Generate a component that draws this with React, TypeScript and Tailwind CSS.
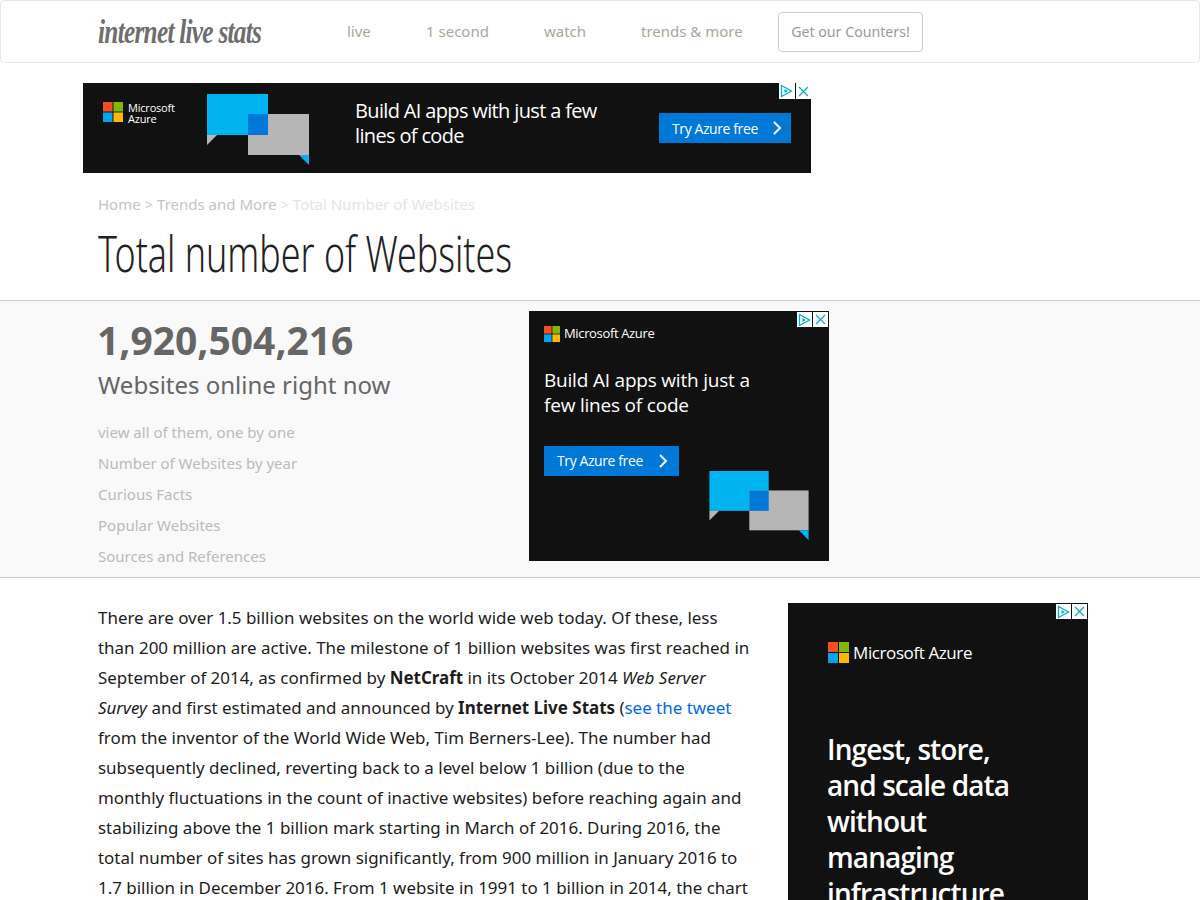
function AdChoices({ pos, box }: { pos: string; box: string }) {
  return (
    <div className={`absolute flex gap-px ${pos}`}>
      <div className={`flex items-center justify-center bg-white ${box}`}>
        <svg width="13" height="14" viewBox="0 0 13 14" fill="none" stroke="#00aecd" strokeWidth="1.3">
          <path d="M1.5 1.5v11l10-5.5z" />
          <path d="M4.5 5v4l3.5-2z" fill="#00aecd" stroke="none" />
        </svg>
      </div>
      <div className={`flex items-center justify-center bg-white ${box}`}>
        <svg width="11" height="11" viewBox="0 0 11 11" fill="none" stroke="#00aecd" strokeWidth="1.2">
          <path d="M1 1l9 9M10 1l-9 9" />
        </svg>
      </div>
    </div>
  );
}

function MsLogo({ size }: { size: number }) {
  return (
    <svg width={size} height={size} viewBox="0 0 21 21" className="shrink-0">
      <rect width="10" height="10" fill="#f25022" />
      <rect x="11" width="10" height="10" fill="#7fba00" />
      <rect y="11" width="10" height="10" fill="#00a4ef" />
      <rect x="11" y="11" width="10" height="10" fill="#ffb900" />
    </svg>
  );
}

function ChatBubbles({ w, h }: { w: number; h: number }) {
  return (
    <svg width={w} height={h} viewBox="0 0 102 72" className="shrink-0">
      <rect x="0" y="0" width="61" height="41" fill="#00b4ef" />
      <path d="M0 41h10L0 51z" fill="#b6b6b6" />
      <rect x="41" y="20" width="61" height="41" fill="#b6b6b6" />
      <rect x="41" y="20" width="20" height="21" fill="#0078d7" />
      <path d="M102 61H92l10 10z" fill="#00b4ef" />
    </svg>
  );
}

function Chevron() {
  return (
    <svg width="10" height="14" viewBox="0 0 10 14" fill="none" stroke="#fff" strokeWidth="2">
      <path d="M2 1l6 6-6 6" />
    </svg>
  );
}

const navItems = [
  { label: "live", cls: "w-[79px]" },
  { label: "1 second", cls: "w-[118px]" },
  { label: "watch", cls: "w-[97px]" },
  { label: "trends & more", cls: "w-[137px]" },
];

const sideLinks = [
  "view all of them, one by one",
  "Number of Websites by year",
  "Curious Facts",
  "Popular Websites",
  "Sources and References",
];

export default function App() {
  return (
    <div className="h-[900px] overflow-hidden bg-white font-['Noto_Sans',sans-serif] text-[#333]">
      <nav className="flex h-[63px] items-center rounded-[4px] border border-[#e7e7e7] bg-white pl-[97px]">
        <div className="w-[249px] font-['Liberation_Serif',serif] text-[34px] font-bold italic leading-none text-[#6e6e6e] [letter-spacing:-1px]">
          <span className="inline-block origin-left scale-x-[0.745] whitespace-nowrap">internet live stats</span>
        </div>
        <div className="flex text-[15px] text-[#a8a898]">
          {navItems.map((item) => (
            <span key={item.label} className={item.cls}>
              {item.label}
            </span>
          ))}
        </div>
        <button className="h-10 w-[145px] rounded-[4px] border border-[#ccc] text-[14.2px] text-[#999]">
          Get our Counters!
        </button>
      </nav>

      <div className="relative ml-[83px] mt-5 flex h-[90px] w-[728px] items-start bg-[#111] text-white">
        <AdChoices pos="right-0 top-0" box="h-4 w-[15.5px]" />
        <div className="ml-5 mt-[19px] flex items-start gap-[5px]">
          <MsLogo size={20} />
          <span className="w-[60px] font-['Open_Sans',sans-serif] text-[11px] font-medium leading-[11px] tracking-[-0.2px]">
            Microsoft Azure
          </span>
        </div>
        <div className="ml-[19px] mt-[11px]">
          <ChatBubbles w={102} h={72} />
        </div>
        <h2 className="ml-[46px] mt-[15px] w-[260px] font-['Open_Sans',sans-serif] text-[20px] font-medium leading-[25px] tracking-[-0.65px]">
          Build AI apps with just a few lines of code
        </h2>
        <div className="ml-[44px] mt-[30px] flex h-[30px] w-[132px] items-center justify-between bg-[#0078d7] pl-[13px] pr-[9px] font-['Open_Sans',sans-serif] text-[14px] font-medium tracking-[-0.4px]">
          Try Azure free
          <Chevron />
        </div>
      </div>

      <div className="ml-[98px] mt-5 text-[15px] leading-[22px] text-[#ccc]">
        <span className="text-[#c4c4c4]">Home</span> &gt; <span className="text-[#c4c4c4]">Trends and More</span>{" "}
        <span className="text-[#e5e5e5]">&gt; Total Number of Websites</span>
      </div>

      <h1 className="ml-[98px] mt-[5px] h-[80px] text-[50px] font-light leading-[66px] text-[#222]">
        <span className="inline-block origin-left scale-x-[0.716] whitespace-nowrap">Total number of Websites</span>
      </h1>

      <section className="flex h-[278px] border-y border-[#ccc] bg-[#f9f9f9] pl-[98px]">
        <div className="w-[431px]">
          <div className="-ml-px mt-[13px] text-[39px] font-bold leading-[52px] text-[#666]">1,920,504,216</div>
          <div className="mt-[2px] text-[24px] leading-[34px] text-[#666]">Websites online right now</div>
          <ul className="mt-[15px] text-[15px] leading-[31px] text-[#bbb]">
            {sideLinks.map((l) => (
              <li key={l}>{l}</li>
            ))}
          </ul>
        </div>
        <div className="relative mt-[10px] h-[250px] w-[300px] bg-[#111] pl-[15px] font-['Open_Sans',sans-serif] text-white">
          <AdChoices pos="right-px top-px" box="h-[15px] w-[15px]" />
          <div className="flex items-center gap-[4px] pt-[13px]">
            <MsLogo size={16} />
            <span className="text-[13px] font-medium tracking-[-0.35px]">Microsoft Azure</span>
          </div>
          <h2 className="mt-[24px] w-[220px] text-[19px] font-medium leading-[25px] tracking-[-0.2px]">
            Build AI apps with just a few lines of code
          </h2>
          <div className="flex">
            <div className="mt-[28px] flex h-[30px] w-[135px] items-center justify-between bg-[#0078d7] pl-[13px] pr-[11px] text-[14px] font-medium tracking-[-0.4px]">
              Try Azure free
              <Chevron />
            </div>
            <div className="ml-[30px] mt-[53px]">
              <ChatBubbles w={100} h={70} />
            </div>
          </div>
        </div>
      </section>

      <main className="flex pl-[98px]">
        <p className="mt-[25px] w-[655px] shrink-0 text-[16.95px] leading-[30px] text-[#1c1c1c]">
          There are over 1.5 billion websites on the world wide web today. Of these, less than 200 million are active.
          The milestone of 1 billion websites was first reached in September of 2014, as confirmed by{" "}
          <b>NetCraft</b> in its October 2014 <i>Web Server Survey</i> and first estimated and announced by{" "}
          <b>Internet Live Stats</b> (<a className="text-[#0066ee]">see the tweet</a> from the inventor of the World
          Wide Web, Tim Berners-Lee). The number had subsequently declined, reverting back to a level below 1 billion
          (due to the monthly fluctuations in the count of inactive websites) before reaching again and stabilizing
          above the 1 billion mark starting in March of 2016. During 2016, the total number of sites has grown
          significantly, from 900 million in January 2016 to 1.7 billion in December 2016. From 1 website in 1991 to 1
          billion in 2014, the chart
        </p>
        <div className="relative ml-[35px] mt-[25px] h-[600px] w-[300px] bg-[#111] pl-10 font-['Open_Sans',sans-serif] text-white">
          <AdChoices pos="right-px top-px" box="h-[15px] w-[15px]" />
          <div className="flex items-center gap-1 pt-[37px]">
            <MsLogo size={21} />
            <span className="text-[17px] font-medium tracking-[-0.4px]">Microsoft Azure</span>
          </div>
          <h2 className="-ml-px mt-[65px] w-[210px] text-[28px] font-semibold leading-[36px] tracking-[-0.9px]">
            Ingest, store, and scale data without managing infrastructure
          </h2>
        </div>
      </main>
    </div>
  );
}
